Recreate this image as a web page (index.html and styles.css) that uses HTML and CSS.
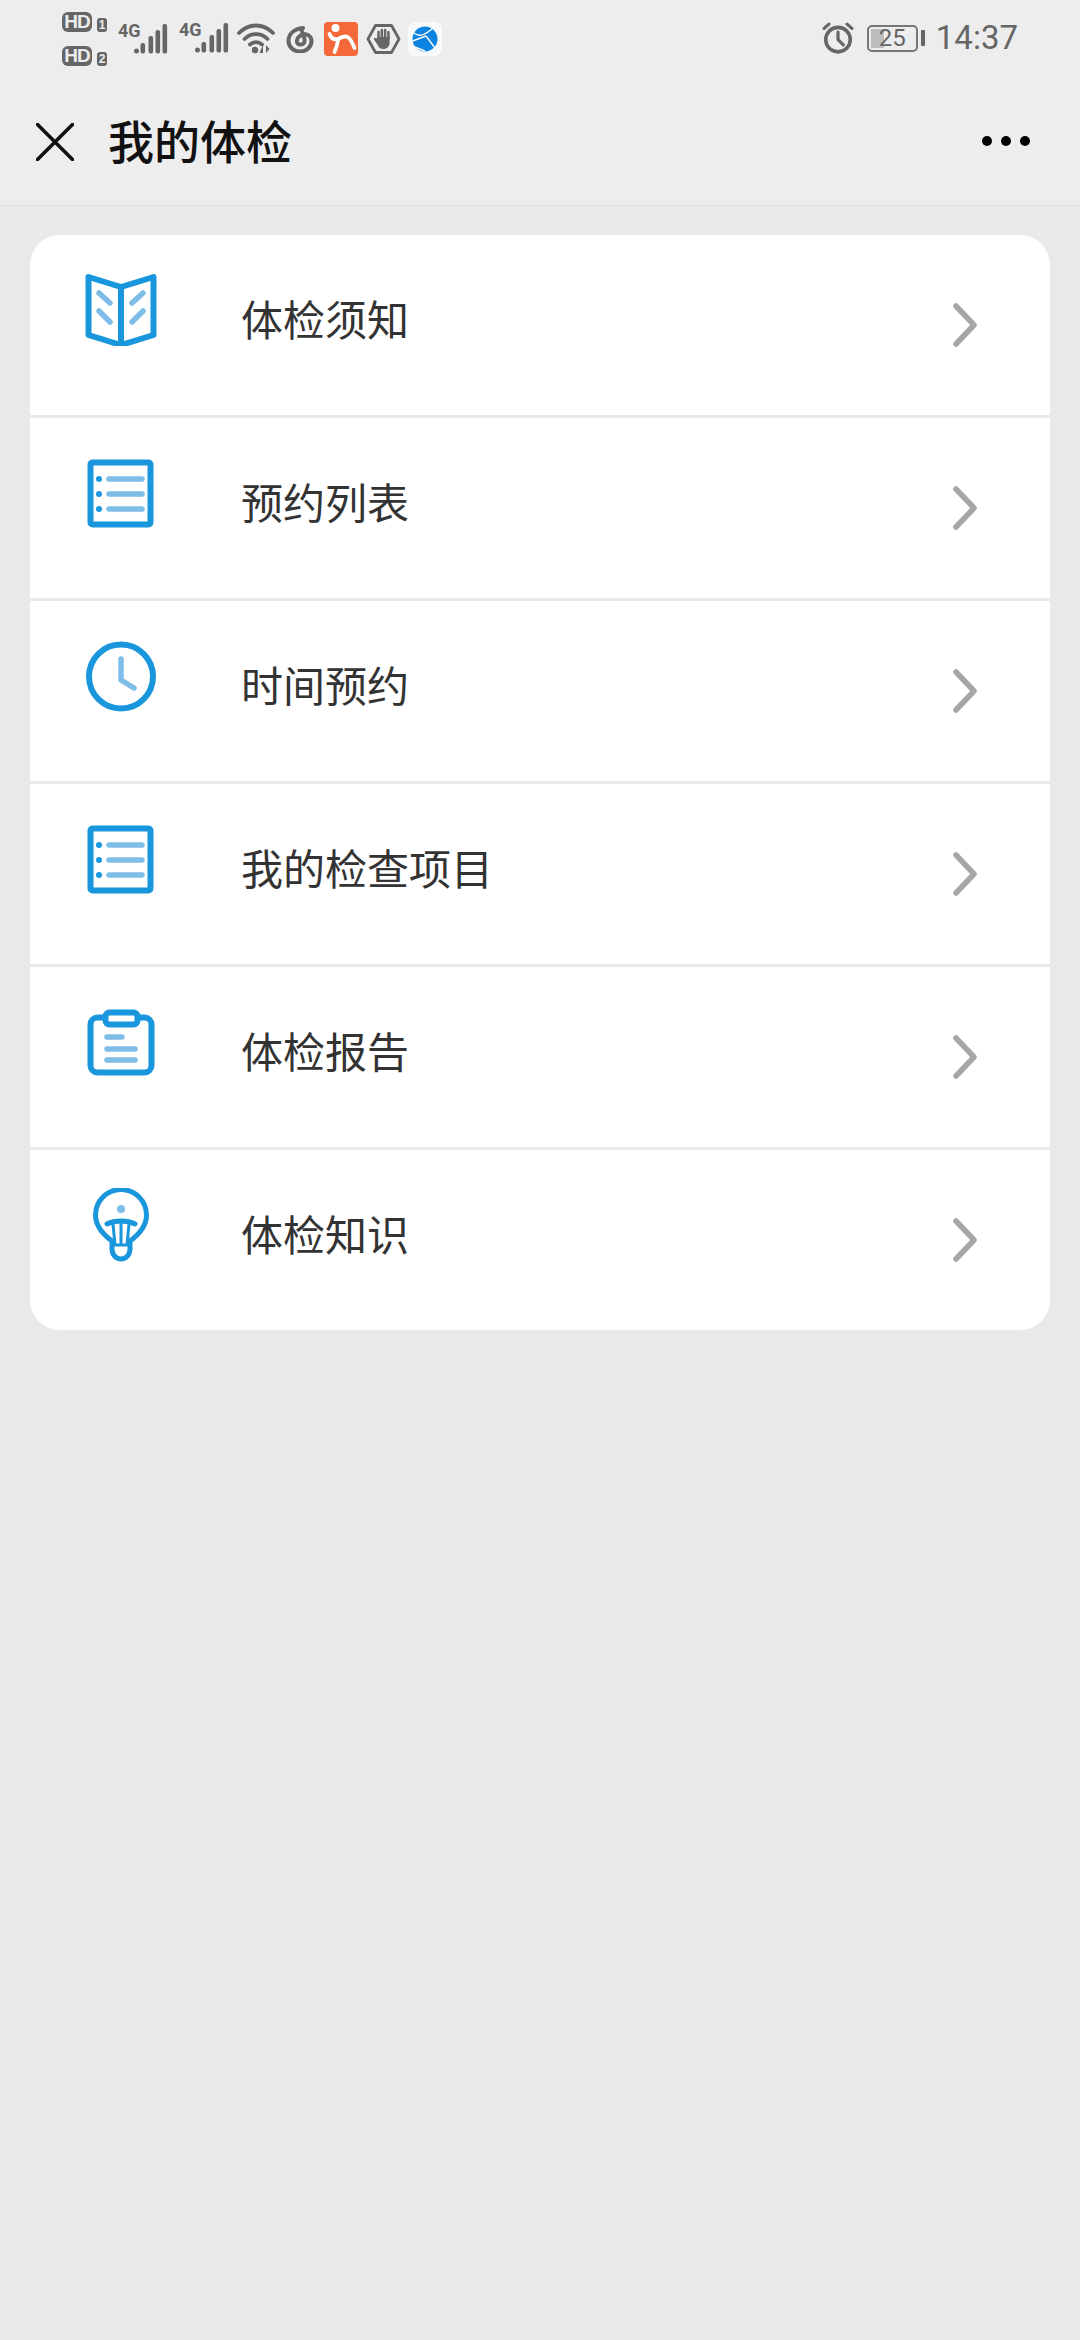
FILE: index.html
```html
<!DOCTYPE html>
<html lang="zh-CN">
<head>
	<meta charset="UTF-8">
	<meta name="viewport" content="width=device-width, initial-scale=1.0">
	<title>我的体检</title>
	<link rel="stylesheet" href="styles.css">
</head>
<body>

	<!-- Status bar -->
	<div class="statusbar">
		<div class="status-left">
			<div class="sims">
				<div class="sim"><span class="hd">HD</span><span class="simnum">1</span></div>
				<div class="sim"><span class="hd">HD</span><span class="simnum">2</span></div>
			</div>
			<div class="signal">
				<span class="net">4G</span>
				<svg width="34" height="32" viewBox="0 0 34 32"><g fill="#666"><circle cx="2.500" cy="28" r="2.500"/><rect x="6.500" y="20" width="4.600" height="10.500" rx="2"/><rect x="14.500" y="13" width="4.600" height="17.500" rx="2"/><rect x="21.500" y="7" width="4.600" height="23.500" rx="2"/><rect x="28.500" y="1" width="4.600" height="29.500" rx="2"/></g></svg>
			</div>
			<div class="signal signal2">
				<span class="net">4G</span>
				<svg width="34" height="32" viewBox="0 0 34 32"><g fill="#666"><circle cx="2.500" cy="28" r="2.500"/><rect x="6.500" y="20" width="4.600" height="10.500" rx="2"/><rect x="14.500" y="13" width="4.600" height="17.500" rx="2"/><rect x="21.500" y="7" width="4.600" height="23.500" rx="2"/><rect x="28.500" y="1" width="4.600" height="29.500" rx="2"/></g></svg>
			</div>
			<svg class="st-icon wifi" width="38" height="32" viewBox="0 0 38 32"><g fill="none" stroke="#666" stroke-width="3.800" stroke-linecap="round"><path d="M2 10C12 0 26 0 36 10"/><path d="M7.500 16C14 9.500 24 9.500 30.500 16"/><path d="M13 21.500C16.500 18.500 21.500 18.500 25 21.500"/></g><g fill="#666"><circle cx="18" cy="27" r="3.200"/><path d="M26 22l-3.500 8h3.500zM29 22v8l3.500-4z"/></g></svg>
			<svg class="st-icon cloud" width="28" height="28" viewBox="0 0 28 28"><g fill="none" stroke="#666" stroke-width="4" stroke-linecap="round"><path d="M17 3C8 4 2.500 9 2.500 16A11.500 10.500 0 0 0 25.500 16C25.500 11 21 8.500 17.500 9.500C13 10.500 10.500 13.500 11 17C11.500 20 16 20.500 18 18C19.500 15.500 18 11 16 6.500"/></g></svg>
			<svg class="st-icon" width="34" height="34" viewBox="0 0 34 34"><rect width="34" height="34" rx="4" fill="#f4683a"/><g fill="none" stroke="#fff" stroke-width="3.800" stroke-linecap="round" stroke-linejoin="round"><path d="M5.500 12C7 16 10 18 14 17C18 15 22 13 25 16C28 19 29 23 30.500 26"/><path d="M14 18C13.500 23 12 26.500 10.500 30"/></g><circle cx="11.500" cy="6" r="4" fill="#fff"/></svg>
			<svg class="st-icon hand" width="35" height="32" viewBox="0 0 35 32"><path d="M9.500 2.500H25.500L33 16L25.500 29.500H9.500L2 16Z" fill="none" stroke="#666" stroke-width="2.800" stroke-linejoin="round"/><path d="M12.500 16V9M15.800 16V7M19.100 16V7M22.400 16V9" fill="none" stroke="#666" stroke-width="2.500" stroke-linecap="round"/><path d="M11.300 14H23.600V19.500C23.600 23.500 21 26 17.500 26C14 26 12.500 24 11 21L8 16.500C7.200 15 9.500 14 10.700 15.500Z" fill="#666"/></svg>
			<svg class="st-icon globe" width="34" height="34" viewBox="0 0 34 34"><rect width="34" height="34" rx="7" fill="#f7f9fa"/><circle cx="17" cy="17" r="12.500" fill="#0a84e0"/><g fill="none" stroke="#f7f9fa" stroke-width="1.400"><path d="M6 11C12 16 18 12 25 6"/><path d="M18 14L27 26"/><path d="M4.500 19L18 14"/><path d="M7 25L17 29"/></g></svg>
		</div>
		<div class="status-right">
			<svg class="alarm" width="32" height="32" viewBox="0 0 30 30"><g fill="none" stroke="#666" stroke-linecap="round"><circle cx="15" cy="16.500" r="11.500" stroke-width="3.400"/><path d="M15 9.500V16.500L20 21.500" stroke-width="3"/><path d="M2 6L6.500 2M28 6L23.500 2" stroke-width="3"/></g></svg>
			<div class="battery">
				<div class="battery-fill"></div>
				<span class="battery-num">25</span>
			</div>
			<div class="battery-nub"></div>
			<span class="time">14:37</span>
		</div>
	</div>

	<!-- Nav bar -->
	<div class="navbar">
		<svg class="nav-close" width="38" height="38" viewBox="0 0 38 38"><path d="M1.500 1.500L36.500 36.500M36.500 1.500L1.500 36.500" fill="none" stroke="#111" stroke-width="3.600" stroke-linecap="round"/></svg>
		<h1 class="nav-title">我的体检</h1>
		<div class="nav-more"><span></span><span></span><span></span></div>
	</div>

	<!-- Menu -->
	<div class="card">
		<div class="row">
			<svg class="row-icon" width="72" height="72" viewBox="0 0 72 72"><path d="M3.500 3L36 13L68.500 3V61L36 71L3.500 61ZM36 13V71" class="dark" stroke-linejoin="round"/><path d="M14 19L25 29M14 37L25 48M58 19L47 29M58 37L47 48" class="light"/></svg>
			<span class="row-text">体检须知</span>
			<svg class="row-arrow" width="26" height="44" viewBox="0 0 26 44"><path d="M4 3L22 22L4 41" /></svg>
		</div>
		<div class="row">
			<svg class="row-icon" width="72" height="72" viewBox="0 0 72 72"><rect x="5.500" y="5.500" width="60" height="62" rx="2" class="dark"/><path d="M24 22H57M24 37H57M24 52H57" class="light"/><g class="dots"><circle cx="14" cy="22" r="3"/><circle cx="14" cy="37" r="3"/><circle cx="14" cy="52" r="3"/></g></svg>
			<span class="row-text">预约列表</span>
			<svg class="row-arrow" width="26" height="44" viewBox="0 0 26 44"><path d="M4 3L22 22L4 41" /></svg>
		</div>
		<div class="row">
			<svg class="row-icon" width="72" height="72" viewBox="0 0 72 72"><circle cx="36" cy="36.500" r="32" class="dark"/><path d="M36 19V40L49 48" class="light" stroke-linejoin="round"/></svg>
			<span class="row-text">时间预约</span>
			<svg class="row-arrow" width="26" height="44" viewBox="0 0 26 44"><path d="M4 3L22 22L4 41" /></svg>
		</div>
		<div class="row">
			<svg class="row-icon" width="72" height="72" viewBox="0 0 72 72"><rect x="5.500" y="5.500" width="60" height="62" rx="2" class="dark"/><path d="M24 22H57M24 37H57M24 52H57" class="light"/><g class="dots"><circle cx="14" cy="22" r="3"/><circle cx="14" cy="37" r="3"/><circle cx="14" cy="52" r="3"/></g></svg>
			<span class="row-text">我的检查项目</span>
			<svg class="row-arrow" width="26" height="44" viewBox="0 0 26 44"><path d="M4 3L22 22L4 41" /></svg>
		</div>
		<div class="row">
			<svg class="row-icon" width="72" height="72" viewBox="0 0 72 72"><rect x="5.500" y="11.500" width="61" height="55" rx="7" class="dark"/><rect x="20.500" y="6.500" width="32" height="12" rx="4" class="dark clip"/><path d="M22 31H37M22 43H50M22 54H50" class="light"/></svg>
			<span class="row-text">体检报告</span>
			<svg class="row-arrow" width="26" height="44" viewBox="0 0 26 44"><path d="M4 3L22 22L4 41" /></svg>
		</div>
		<div class="row">
			<svg class="row-icon" width="72" height="74" viewBox="0 0 72 74"><path d="M27 53C16 45 10.500 37 10.500 27A25.500 25.500 0 0 1 61.500 27C61.500 37 56 45 45 53V61A9 10 0 0 1 27 61Z" class="dark thin" stroke-linejoin="round"/><path d="M22 36C30 32 42 32 50 36" class="dark thin" stroke-linecap="round"/><path d="M28 36L30 57H42L44 36M36 35V57" class="dark hair" stroke-linejoin="round"/><circle cx="36" cy="21" r="4" class="lightdot"/></svg>
			<span class="row-text">体检知识</span>
			<svg class="row-arrow" width="26" height="44" viewBox="0 0 26 44"><path d="M4 3L22 22L4 41" /></svg>
		</div>
	</div>

</body>
</html>
```

FILE: styles.css
```css
* {
	box-sizing: border-box;
}
body {
	margin: 0;
	min-height: 2340px;
	background-color: #e9e9e9;
	font-family: "Noto Sans CJK SC", "Noto Sans", sans-serif;
}

/* status bar */
.statusbar {
	display: flex;
	justify-content: space-between;
	align-items: center;
	height: 78px;
	padding: 0 62px;
	background-color: #ededed;
}
.status-left, .status-right {
	display: flex;
	align-items: center;
}
.sims {
	display: flex;
	flex-direction: column;
	gap: 14px;
}
.sim {
	display: flex;
	align-items: flex-end;
	gap: 5px;
}
.hd {
	width: 30px;
	height: 20px;
	border-radius: 6px;
	background-color: #666;
	color: #ededed;
	font: bold 19px/20px "Liberation Sans", sans-serif;
	letter-spacing: -1px;
	text-align: center;
}
.simnum {
	width: 10px;
	height: 14px;
	border-radius: 3px;
	background-color: #666;
	color: #ededed;
	font: bold 12px/14px "Liberation Sans", sans-serif;
	text-align: center;
}
.signal {
	display: flex;
	align-items: flex-start;
	margin-left: 11px;
	height: 32px;
}
.signal2 {
	margin-top: -2px;
}
.net {
	width: 16px;
	color: #666;
	font: bold 18px/16px "Liberation Sans Narrow", "Roboto", sans-serif;
}
.st-icon {
	margin-left: 10px;
}
.wifi {
	margin-left: 8px;
}
.cloud {
	margin-left: 11px;
}
.hand {
	margin-left: 8px;
}
.globe {
	margin-left: 7px;
}
.status-right {
	margin-bottom: 2px;
	color: #666;
}
.alarm {
	margin-right: 13px;
}
.battery {
	position: relative;
	width: 51px;
	height: 27px;
	border: 2px solid #777;
	border-radius: 5px;
	text-align: center;
}
.battery-fill {
	position: absolute;
	left: 2px;
	top: 2px;
	bottom: 2px;
	width: 13px;
	background-color: #bdbdbd;
}
.battery-num {
	position: relative;
	display: block;
	font: 24px/23px "Roboto", sans-serif;
}
.battery-nub {
	width: 4px;
	height: 16px;
	margin: 0 11px 0 3px;
	border-radius: 1px;
	background-color: #666;
}
.time {
	font: 33px/40px "Roboto", sans-serif;
}

/* nav bar */
.navbar {
	display: flex;
	align-items: center;
	height: 128px;
	padding: 0 50px 0 36px;
	background-color: #ededed;
	border-bottom: 1px solid #e0e0e0;
}
.nav-title {
	flex: 1;
	margin: 0 0 6px 34px;
	color: #111;
	font-size: 46px;
	font-weight: 500;
	line-height: 60px;
}
.nav-more {
	display: flex;
	gap: 9px;
	margin-bottom: 2px;
}
.nav-more span {
	width: 10px;
	height: 10px;
	border-radius: 50%;
	background-color: #000;
}

/* menu card */
.card {
	margin: 29px 30px 0;
	background-color: #fff;
	border-radius: 30px;
	overflow: hidden;
}
.row {
	display: flex;
	align-items: center;
	height: 183px;
	padding: 0 72px 0 55px;
	border-bottom: 3px solid #e9e9e9;
}
.row:last-child {
	height: 180px;
	border-bottom: none;
}
.row-icon {
	flex-shrink: 0;
	margin-bottom: 30px;
}
.row-text {
	flex: 1;
	margin: 0 0 14px 84px;
	color: #333;
	font-size: 42px;
	line-height: 56px;
}
.row-arrow path {
	fill: none;
	stroke: #a6a6a6;
	stroke-width: 5.500;
	stroke-linecap: round;
	stroke-linejoin: round;
}
.row-icon .dark {
	fill: none;
	stroke: #1a96dc;
	stroke-width: 6;
}
.row-icon .thin {
	stroke-width: 5;
}
.row-icon .hair {
	stroke-width: 3;
}
.row-icon .clip {
	fill: #fff;
}
.row-icon .light {
	fill: none;
	stroke: #7dbde8;
	stroke-width: 5.500;
	stroke-linecap: round;
}
.row-icon .dots {
	fill: #1a96dc;
}
.row-icon .lightdot {
	fill: #7dbde8;
}
```
